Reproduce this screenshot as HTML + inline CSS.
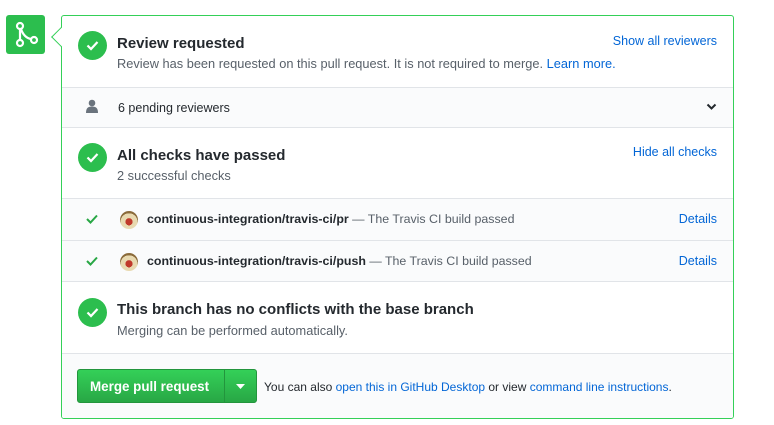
<!DOCTYPE html>
<html><head><meta charset="utf-8"><style>
*{box-sizing:border-box;margin:0;padding:0}
body{width:774px;height:425px;background:#fff;font-family:"Liberation Sans",Arial,sans-serif;color:#24292e;position:relative;overflow:hidden}
.icon{position:absolute;left:6px;top:15px;width:39px;height:39px;background:#2cbe4e;border-radius:3px}
.box{position:absolute;left:61px;top:15px;width:673px;height:404px;border:1px solid #34d058;border-radius:3px;overflow:hidden}
.arrow{position:absolute;left:54px;top:30px;width:14px;height:14px;background:#fff;border-left:1px solid #34d058;border-bottom:1px solid #34d058;transform:rotate(45deg);z-index:2}
.sec{position:absolute;left:0;width:671px;border-bottom:1px solid #e1e4e8}
.grey{background:#fafbfc}
.circ{position:absolute;left:16px;width:29px;height:29px;border-radius:50%;background:#2cbe4e}
.circ svg{position:absolute;left:8px;top:9px}
.t{position:absolute;left:55px;font-size:15px;font-weight:bold;color:#24292e}
.s{position:absolute;left:55px;font-size:12.8px;color:#586069}
a{color:#0366d6;text-decoration:none}
.r{position:absolute;right:16px;font-size:12.5px;color:#0366d6}
.row{font-size:12.4px;color:#586069}
.row b{color:#24292e}
.av{position:absolute;left:58px;width:18px;height:18px;border-radius:50%;background:radial-gradient(circle at 50% 60%,#c0392b 0 25%,#e8d9b0 26% 60%,#8a6a3a 61%)}
</style></head><body>
<div class="icon"><svg width="39" height="39" viewBox="0 0 39 39"><g fill="none" stroke="#fff" stroke-width="2.2"><circle cx="14" cy="11" r="3"/><circle cx="14" cy="28" r="3"/><circle cx="28" cy="25" r="3"/><path d="M14 14v11M15 14c2 6 5 9 10 10"/></g></svg></div>
<div class="arrow"></div>
<div class="box">
 <div class="sec" style="top:0;height:72px">
  <div class="circ" style="top:15px"><svg width="13" height="11" viewBox="0 0 13 11"><path d="M1.5 5.5l3.5 3.5 6.5-7" fill="none" stroke="#fff" stroke-width="2.2"/></svg></div>
  <div class="t" style="top:19px">Review requested</div>
  <div class="s" style="top:40px">Review has been requested on this pull request. It is not required to merge. <a>Learn more.</a></div>
  <div class="r" style="top:18px">Show all reviewers</div>
 </div>
 <div class="sec grey" style="top:72px;height:40px">
  <svg style="position:absolute;left:24px;top:11px" width="12" height="14" viewBox="0 0 12 14"><circle cx="6" cy="4" r="3.3" fill="#6a737d"/><path d="M0 14c0-5 2-6.5 6-6.5s6 1.5 6 6.5z" fill="#6a737d"/></svg>
  <div style="position:absolute;left:56px;top:13px;font-size:12.5px;color:#24292e">6 pending reviewers</div>
  <svg style="position:absolute;left:644px;top:15px" width="11" height="8" viewBox="0 0 11 8"><path d="M1.5 1.5l4 4 4-4" fill="none" stroke="#24292e" stroke-width="2"/></svg>
 </div>
 <div class="sec" style="top:112px;height:71px">
  <div class="circ" style="top:15px"><svg width="13" height="11" viewBox="0 0 13 11"><path d="M1.5 5.5l3.5 3.5 6.5-7" fill="none" stroke="#fff" stroke-width="2.2"/></svg></div>
  <div class="t" style="top:19px">All checks have passed</div>
  <div class="s" style="top:40px">2 successful checks</div>
  <div class="r" style="top:17px">Hide all checks</div>
 </div>
 <div class="sec grey row" style="top:183px;height:42px">
  <svg style="position:absolute;left:24px;top:15px" width="12" height="10" viewBox="0 0 12 10"><path d="M1 5l3.5 3.5L11 1.5" fill="none" stroke="#28a745" stroke-width="2"/></svg>
  <div class="av" style="top:12px"></div>
  <div style="position:absolute;left:85px;top:13px"><b>continuous-integration/travis-ci/pr</b> — The Travis CI build passed</div>
  <div class="r" style="top:13px">Details</div>
 </div>
 <div class="sec grey row" style="top:225px;height:41px">
  <svg style="position:absolute;left:24px;top:15px" width="12" height="10" viewBox="0 0 12 10"><path d="M1 5l3.5 3.5L11 1.5" fill="none" stroke="#28a745" stroke-width="2"/></svg>
  <div class="av" style="top:12px"></div>
  <div style="position:absolute;left:85px;top:13px"><b>continuous-integration/travis-ci/push</b> — The Travis CI build passed</div>
  <div class="r" style="top:13px">Details</div>
 </div>
 <div class="sec" style="top:266px;height:72px">
  <div class="circ" style="top:16px"><svg width="13" height="11" viewBox="0 0 13 11"><path d="M1.5 5.5l3.5 3.5 6.5-7" fill="none" stroke="#fff" stroke-width="2.2"/></svg></div>
  <div class="t" style="top:19px">This branch has no conflicts with the base branch</div>
  <div class="s" style="top:41px">Merging can be performed automatically.</div>
 </div>
 <div class="sec grey" style="top:338px;height:66px;border:none">
  <div style="position:absolute;left:15px;top:15px;width:180px;height:34px;border-radius:3px;background:linear-gradient(#34d058,#28a745);border:1px solid #23953d">
   <div style="position:absolute;left:12px;top:9px;color:#fff;font-weight:bold;font-size:13.4px">Merge pull request</div>
   <div style="position:absolute;left:146px;top:0;width:1px;height:32px;background:#23953d"></div>
   <svg style="position:absolute;left:158px;top:14px" width="9" height="5" viewBox="0 0 9 5"><path d="M0 0h9L4.5 5z" fill="#fff"/></svg>
  </div>
  <div style="position:absolute;left:202px;top:26px;font-size:12px;color:#24292e">You can also <a>open this in GitHub Desktop</a> or view <a>command line instructions</a>.</div>
 </div>
</div>
</body></html>
